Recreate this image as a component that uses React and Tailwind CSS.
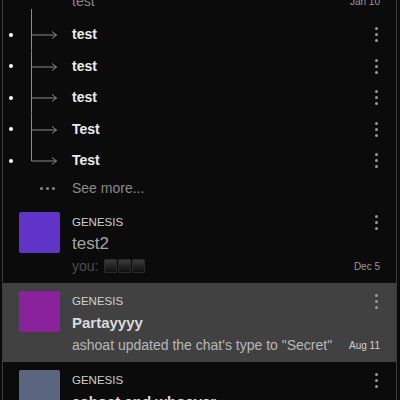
import React from 'react';

const font = { fontFamily: '"Liberation Sans", Arial, sans-serif' };

function Kebab({ color = '#9a9a9a' }) {
  return (
    <div className="w-[8px] flex flex-col items-center gap-[3px]">
      {[0, 1, 2].map(i => (
        <span key={i} className="block w-[3px] h-[3px] rounded-full" style={{ background: color }} />
      ))}
    </div>
  );
}

function Branch({ first, last }) {
  // line at x=12, arrow to x=37.5 (svg starts at page x=19)
  return (
    <svg width="53" height="31.5" viewBox="0 0 53 31.5" className="shrink-0 overflow-visible">
      <line x1="12.5" y1={first ? -10 : 0} x2="12.5" y2={last ? 16 : 31.5} stroke="#8a8a8a" strokeWidth="1" />
      <line x1="12.5" y1="16" x2="37.5" y2="16" stroke="#8a8a8a" strokeWidth="1" />
      <polyline points="33,12.5 37.5,16 33,19.5" fill="none" stroke="#8a8a8a" strokeWidth="1" />
    </svg>
  );
}

const sidebar = ['test', 'test', 'test', 'Test', 'Test'];

const threads = [
  { color: '#6134c8', title: 'test2', titleCls: 'text-[17px] text-[#a3a3a3]', last: 'you:', boxes: true, date: 'Dec 5', dateCls: 'text-[#9a9a9a]' },
  { color: '#8a229c', title: 'Partayyyy', titleCls: 'text-[15px] font-bold text-[#dadada]', last: 'ashoat updated the chat\'s type to "Secret"', date: 'Aug 11', dateCls: 'text-[#d0d0d0]', active: true },
  { color: '#5a6680', title: 'ashoat and whoever', titleCls: 'text-[15px] font-bold text-[#dadada]', last: 'ashoat created this chat', date: 'Aug 3', dateCls: 'text-[#9a9a9a]' },
];

function ThreadRow({ t }) {
  return (
    <div className={`flex h-[79px] pl-[16px] pr-[16px] ${t.active ? 'bg-[#414141]' : ''}`}>
      <div className="w-[41px] h-[41px] mt-[8px] rounded-[2px] shrink-0" style={{ background: t.color }} />
      <div className="flex-1 ml-[12px] min-w-0">
        <div className="flex items-center justify-between h-[16px] mt-[10px]">
          <span className="text-[11.5px] text-[#cfcfcf] leading-[16px]">GENESIS</span>
          <Kebab />
        </div>
        <div className={`h-[22px] mt-[3px] leading-[22px] truncate ${t.titleCls}`}>{t.title}</div>
        <div className="flex items-center justify-between h-[20px] mt-[1px]">
          {t.boxes ? (
            <span className="flex items-center gap-[1px] text-[14px] text-[#4d4d4d]">
              you:
              <span className="ml-[5px] flex gap-[1px]">
                {[0, 1, 2].map(i => (
                  <span key={i} className="block w-[13px] h-[14px] rounded-[1px] border border-[#2a2a2a] bg-gradient-to-b from-[#3a3a3a] to-[#111]" />
                ))}
              </span>
            </span>
          ) : (
            <span className="text-[14px] text-[#b8b8b8] truncate">{t.last}</span>
          )}
          <span className={`text-[10px] shrink-0 ${t.dateCls}`}>{t.date}</span>
        </div>
      </div>
    </div>
  );
}

export default function App() {
  return (
    <div className="w-[400px] h-[400px] overflow-hidden bg-[#0b0b0b]" style={font}>
      <div className="ml-[2px] w-[395px] min-h-[420px] border-x border-[#3a3a3a]">
        {/* parent thread, scrolled mostly out of view */}
        <div className="-mt-[17px] h-[36px] flex items-center pl-[69px] pr-[16px] justify-between">
          <span className="text-[14px] text-[#8a8a8a]">test</span>
          <span className="text-[10px] text-[#9a9a9a]">Jan 10</span>
        </div>

        {sidebar.map((s, i) => (
          <div key={i} className="flex items-center h-[31.5px] pr-[16px]">
            <div className="w-[16px] flex justify-center shrink-0">
              <span className="block w-[4px] h-[4px] rounded-full bg-white" />
            </div>
            <Branch first={i === 0} last={i === sidebar.length - 1} />
            <span className="flex-1 text-[14px] font-bold text-[#ececec]">{s}</span>
            <Kebab />
          </div>
        ))}

        <div className="flex h-[27.5px] items-start">
          <div className="w-[69px] h-[23px] flex items-center justify-end gap-[3px] pr-[17px]">
            {[0, 1, 2].map(i => (
              <span key={i} className="block w-[3px] h-[3px] rounded-full bg-[#8a8a8a]" />
            ))}
          </div>
          <span className="leading-[23px] text-[14px] text-[#8a8a8a]">See more...</span>
        </div>

        {threads.map((t, i) => (
          <ThreadRow key={i} t={t} />
        ))}
      </div>
    </div>
  );
}
